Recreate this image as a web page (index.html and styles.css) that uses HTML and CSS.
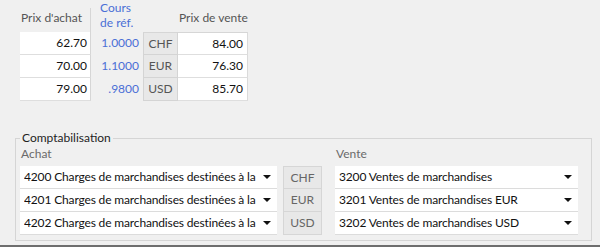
FILE: index.html
```html
<!DOCTYPE html>
<html lang="fr">
<head>
    <meta charset="UTF-8">
    <title>Cours et comptabilisation</title>
    <link rel="stylesheet" href="styles.css">
</head>
<body>
    <div class="rates">
        <div class="head buy-head">Prix d'achat</div>
        <div class="head rate-head">Cours<br>de réf.</div>
        <div class="head"></div>
        <div class="head sell-head">Prix de vente</div>

        <div class="cell buy">62.70</div>
        <div class="cell rate">1.0000</div>
        <div class="cell cur first">CHF</div>
        <div class="cell sell first">84.00</div>

        <div class="cell buy">70.00</div>
        <div class="cell rate">1.1000</div>
        <div class="cell cur">EUR</div>
        <div class="cell sell">76.30</div>

        <div class="cell buy">79.00</div>
        <div class="cell rate">.9800</div>
        <div class="cell cur">USD</div>
        <div class="cell sell">85.70</div>
    </div>

    <fieldset class="accounts">
        <legend>Comptabilisation</legend>
        <div class="accounts-grid">
            <div class="label">Achat</div>
            <div></div>
            <div class="label sale">Vente</div>

            <div class="combo"><span>4200 Charges de marchandises destinées à la revente</span><i class="arrow"></i></div>
            <div class="cur-tag first">CHF</div>
            <div class="combo sale"><span>3200 Ventes de marchandises</span><i class="arrow"></i></div>

            <div class="combo"><span>4201 Charges de marchandises destinées à la revente EUR</span><i class="arrow"></i></div>
            <div class="cur-tag">EUR</div>
            <div class="combo sale"><span>3201 Ventes de marchandises EUR</span><i class="arrow"></i></div>

            <div class="combo"><span>4202 Charges de marchandises destinées à la revente USD</span><i class="arrow"></i></div>
            <div class="cur-tag">USD</div>
            <div class="combo sale"><span>3202 Ventes de marchandises USD</span><i class="arrow"></i></div>
        </div>
    </fieldset>

    <div class="window-edge"></div>
</body>
</html>
```

FILE: styles.css
```css
body {
    margin: 0;
    height: 247px;
    background-color: #f0f0f0;
    font-family: Lato, "Open Sans", Arial, sans-serif;
    font-size: 12px;
    color: #111111;
    position: relative;
    overflow: hidden;
}
.rates {
    display: grid;
    grid-template-columns: 71px 52px 35px 70px;
    grid-template-rows: 32px 23px 23px 23px;
    margin-left: 20px;
}
.head {
    color: #555555;
    white-space: nowrap;
    padding: 10px 0 0 1px;
    line-height: 16px;
}
.buy-head {
    margin-top: 8px;
    padding-top: 2px;
    border-right: 1px solid #d6d6d6;
}
.rate-head {
    color: #4a6fd6;
    padding: 0 0 0 9px;
    line-height: 15px;
    margin-top: 0;
}
.cell {
    line-height: 22px;
    border-bottom: 1px solid #dedede;
    box-sizing: border-box;
}
.buy {
    background-color: #ffffff;
    text-align: right;
    padding-right: 3px;
    border-right: 1px solid #d6d6d6;
}
.rate {
    color: #4a6fd6;
    text-align: right;
    padding-right: 4px;
    border-bottom-color: transparent;
}
.cur {
    background-color: #e8e8e8;
    color: #555555;
    text-align: center;
    border-left: 1px solid #d4d4d4;
    border-right: 1px solid #d4d4d4;
    border-bottom-color: #d4d4d4;
}
.sell {
    background-color: #ffffff;
    text-align: right;
    padding-right: 4px;
    border-right: 1px solid #dadada;
}
.cur.first,
.sell.first {
    border-top: 1px solid #d6d6d6;
    line-height: 21px;
}
.accounts {
    margin: 30px 0 0 15px;
    width: 577px;
    padding: 0 6px 5px 4px;
    border: 1px solid #d5d5d5;
    box-sizing: border-box;
}
.accounts legend {
    padding: 0 2px;
    margin-left: 0;
    color: #1e1e1e;
    line-height: 14px;
}
.accounts-grid {
    display: grid;
    grid-template-columns: 257px 39px 250px;
    column-gap: 6px;
}
.sale {
    margin-left: 7px;
}
.label {
    color: #6a6a6a;
    line-height: 18px;
    padding: 0 0 3px 1px;
}
.combo {
    display: flex;
    align-items: center;
    background-color: #ffffff;
    border-bottom: 1px solid #dcdcdc;
    height: 23px;
    box-sizing: border-box;
    padding: 0 6px 0 4px;
}
.combo span {
    flex: 1;
    overflow: hidden;
    white-space: nowrap;
    margin-right: 6px;
    line-height: 22px;
    letter-spacing: -0.15px;
}
.arrow {
    width: 0;
    height: 0;
    border-left: 4px solid transparent;
    border-right: 4px solid transparent;
    border-top: 4px solid #111111;
}
.cur-tag {
    background-color: #e8e8e8;
    color: #666666;
    text-align: center;
    line-height: 22px;
    border: 1px solid #d6d6d6;
    border-top: none;
}
.cur-tag.first {
    border-top: 1px solid #d6d6d6;
    line-height: 21px;
}
.window-edge {
    position: absolute;
    left: 0;
    right: 0;
    bottom: 0;
    height: 2px;
    background-color: #6e6e6e;
}
```
